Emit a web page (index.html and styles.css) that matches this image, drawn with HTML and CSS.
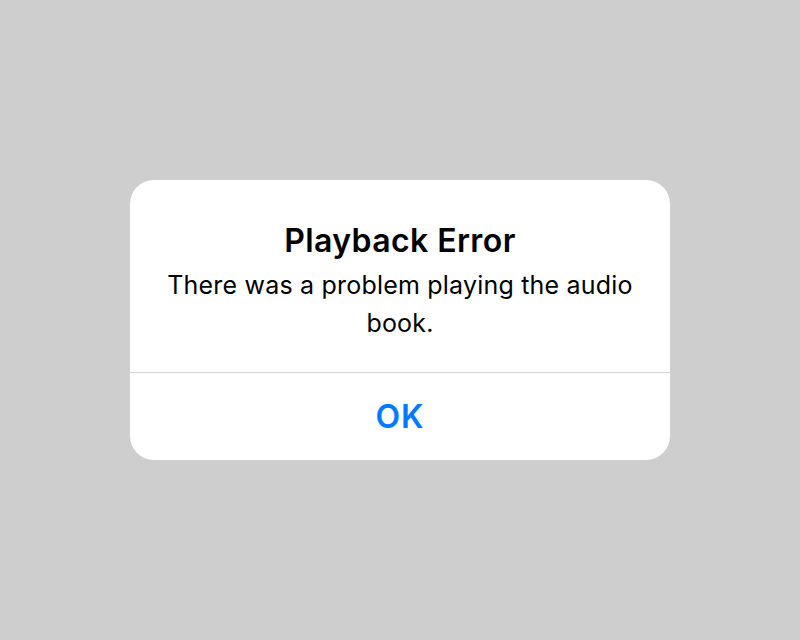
FILE: index.html
```html
<!DOCTYPE html>
<html lang="en">

<head>
    <meta charset="UTF-8">
    <meta name="viewport" content="width=device-width, initial-scale=1.0">
    <title>Playback Error</title>
    <link rel="stylesheet" href="styles.css">
</head>

<body>
    <div class="alert">
        <div class="alert-body">
            <div class="alert-title">Playback Error</div>
            <div class="alert-message">There was a problem playing the audio book.</div>
        </div>
        <div class="alert-actions">
            <button class="alert-button">OK</button>
        </div>
    </div>
</body>

</html>
```

FILE: styles.css
```css
body {
    display: flex;
    justify-content: center;
    align-items: center;
    height: 100vh;
    margin: 0;
    background-color: #cecece;
    font-family: Inter, "Noto Sans", sans-serif;
    color: #000000;
}

.alert {
    width: 540px;
    height: 280px;
    background-color: #ffffff;
    border-radius: 24px;
    display: flex;
    flex-direction: column;
    overflow: hidden;
}

.alert-body {
    flex-shrink: 0;
    padding: 40px 30px 0;
    height: 193px;
    box-sizing: border-box;
    text-align: center;
    border-bottom: 1px solid #d4d4d4;
}

.alert-title {
    font-size: 32px;
    font-weight: 600;
    line-height: 42px;
    letter-spacing: 0.4px;
}

.alert-message {
    font-size: 25px;
    line-height: 38px;
    letter-spacing: 0.2px;
    margin-top: 4px;
}

.alert-actions {
    flex: 1;
    display: flex;
}

.alert-button {
    flex: 1;
    border: none;
    background: none;
    font-family: inherit;
    font-size: 32px;
    font-weight: 600;
    letter-spacing: 1px;
    color: #007aff;
    padding: 0;
    cursor: pointer;
}
```
